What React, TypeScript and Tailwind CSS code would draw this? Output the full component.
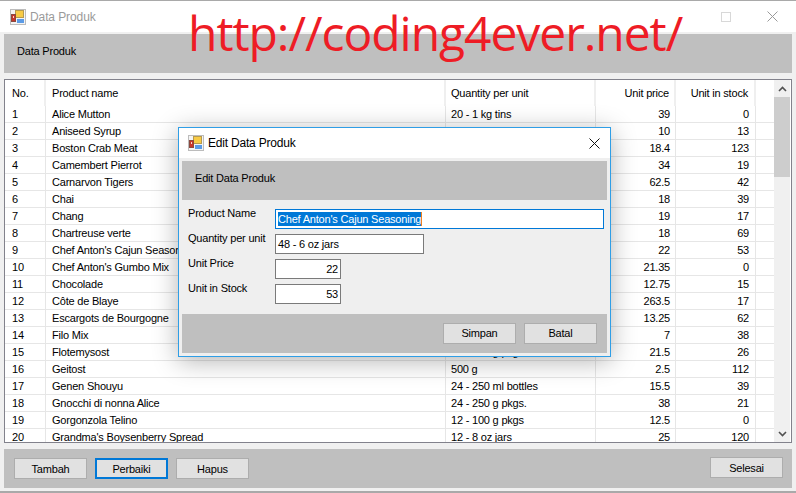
const rows: [string, string, string, string][] = [
  ["Alice Mutton", "20 - 1 kg tins", "39", "0"],
  ["Aniseed Syrup", "12 - 550 ml bottles", "10", "13"],
  ["Boston Crab Meat", "24 - 4 oz tins", "18.4", "123"],
  ["Camembert Pierrot", "15 - 300 g rounds", "34", "19"],
  ["Carnarvon Tigers", "16 kg pkg.", "62.5", "42"],
  ["Chai", "10 boxes x 20 bags", "18", "39"],
  ["Chang", "24 - 12 oz bottles", "19", "17"],
  ["Chartreuse verte", "750 cc per bottle", "18", "69"],
  ["Chef Anton's Cajun Seasoning", "48 - 6 oz jars", "22", "53"],
  ["Chef Anton's Gumbo Mix", "36 boxes", "21.35", "0"],
  ["Chocolade", "10 pkgs.", "12.75", "15"],
  ["Côte de Blaye", "12 - 75 cl bottles", "263.5", "17"],
  ["Escargots de Bourgogne", "24 pieces", "13.25", "62"],
  ["Filo Mix", "16 - 2 kg boxes", "7", "38"],
  ["Flotemysost", "10 - 500 g pkgs.", "21.5", "26"],
  ["Geitost", "500 g", "2.5", "112"],
  ["Genen Shouyu", "24 - 250 ml bottles", "15.5", "39"],
  ["Gnocchi di nonna Alice", "24 - 250 g pkgs.", "38", "21"],
  ["Gorgonzola Telino", "12 - 100 g pkgs", "12.5", "0"],
  ["Grandma's Boysenberry Spread", "12 - 8 oz jars", "25", "120"],
];

function AppIcon() {
  return (
    <svg width="16" height="16" viewBox="0 0 16 16" className="shrink-0">
      <rect x="0.5" y="0.5" width="15" height="15" fill="#f4f4f4" stroke="#bcbcbc" />
      <rect x="5.5" y="1.5" width="8" height="7" fill="#f8cb45" stroke="#b59a50" />
      <rect x="1.5" y="5.5" width="4" height="7" fill="#c9352b" stroke="#8a4a40" />
      <rect x="3" y="7" width="1" height="2" fill="#f3d9cc" />
      <rect x="7" y="10" width="7" height="4" fill="#5b9be6" />
    </svg>
  );
}

function WinButton({ label, focused }: { label: string; focused?: boolean }) {
  return (
    <div
      className={
        focused
          ? "w-[73px] h-[21px] flex items-center justify-center bg-[#e1e1e1] border-2 border-[#0078d7] text-black"
          : "w-[73px] h-[21px] flex items-center justify-center bg-[#e1e1e1] border border-[#adadad] text-black"
      }
    >
      {label}
    </div>
  );
}

function Field({ width, value, right }: { width: string; value: string; right?: boolean }) {
  return (
    <div className={`${width} h-[20px] bg-white border border-[#7a7a7a] flex items-center px-[2px] ${right ? "justify-end" : ""}`}>
      {value}
    </div>
  );
}

export default function App() {
  return (
    <div className="relative w-[796px] h-[493px] overflow-hidden bg-[#f0f0f0] text-[11px] leading-[14px] tracking-[-0.2px] text-black font-['Liberation_Sans',Arial,sans-serif] border-t border-b-2 border-[#a9a9a9]">
      {/* title bar */}
      <div className="h-[31px] bg-white flex items-center pl-[10px] pr-[18px]">
        <AppIcon />
        <span className="ml-[4px] text-[12px] tracking-[-0.1px] text-[#9a9a9a]">Data Produk</span>
        <div className="ml-auto flex items-center gap-[36px]">
          <div className="w-[10px] h-[10px] border border-[#d8d8d8]" />
          <svg width="11" height="11" viewBox="0 0 11 11" stroke="#9a9a9a" fill="none">
            <path d="M0.5 0.5 L10.5 10.5 M10.5 0.5 L0.5 10.5" />
          </svg>
        </div>
      </div>

      <div className="px-[4px] pt-[2px]">
        {/* header panel */}
        <div className="h-[39px] bg-[#bfbfbf] pl-[13px] pt-[10px]">Data Produk</div>

        {/* grid */}
        <div className="mt-[6px] h-[364px] bg-white border border-[#82828c] flex overflow-hidden">
          <div className="flex-1 min-w-0">
            <div className="h-[26px] flex items-center">
              <div className="w-[41px] h-full pl-[7px] flex items-center border-r-2 border-[#efefef]">No.</div>
              <div className="w-[400px] h-full pl-[6px] flex items-center border-r-2 border-[#efefef]">Product name</div>
              <div className="w-[150px] h-full pl-[5px] flex items-center border-r-2 border-[#efefef]">Quantity per unit</div>
              <div className="w-[80px] h-full pr-[5px] flex items-center justify-end border-r-2 border-[#efefef]">Unit price</div>
              <div className="w-[80px] h-full pr-[6px] flex items-center justify-end border-r-2 border-[#efefef]">Unit in stock</div>
            </div>
            {rows.map((r, i) => (
              <div key={r[0]} className="h-[17px] flex items-center border-b border-[#e6e6e6]">
                <div className="w-[41px] h-full pl-[7px] flex items-center border-r border-[#e6e6e6]">{i + 1}</div>
                <div className="w-[400px] h-full pl-[6px] flex items-center border-r border-[#e6e6e6]">{r[0]}</div>
                <div className="w-[150px] h-full pl-[5px] flex items-center border-r border-[#e6e6e6]">{r[1]}</div>
                <div className="w-[80px] h-full pr-[5px] flex items-center justify-end border-r border-[#e6e6e6]">{r[2]}</div>
                <div className="w-[80px] h-full pr-[6px] flex items-center justify-end border-r border-[#e6e6e6]">{r[3]}</div>
              </div>
            ))}
          </div>
          {/* scrollbar */}
          <div className="w-[16px] mr-[1px] bg-[#f0f0f0] flex flex-col">
            <div className="h-[17px] flex items-center justify-center">
              <svg width="9" height="6" viewBox="0 0 9 6" fill="none" stroke="#505050" strokeWidth="1.6">
                <path d="M1 5 L4.5 1.5 L8 5" />
              </svg>
            </div>
            <div className="h-[80px] bg-[#cdcdcd]" />
            <div className="flex-1" />
            <div className="h-[17px] flex items-center justify-center">
              <svg width="9" height="6" viewBox="0 0 9 6" fill="none" stroke="#505050" strokeWidth="1.6">
                <path d="M1 1 L4.5 4.5 L8 1" />
              </svg>
            </div>
          </div>
        </div>

        {/* bottom panel */}
        <div className="mt-[6px] h-[39px] bg-[#bfbfbf] pl-[10px] pr-[9px] flex items-center gap-[8px]">
          <WinButton label="Tambah" />
          <WinButton label="Perbaiki" focused />
          <WinButton label="Hapus" />
          <div className="ml-auto -mt-[2px]">
            <WinButton label="Selesai" />
          </div>
        </div>
      </div>

      {/* watermark */}
      <div className="absolute left-[188px] top-[4px] text-[48px] leading-[56px] tracking-[-1.05px] text-[#ee1c25] font-['Open_Sans',sans-serif] whitespace-nowrap">
        http://coding4ever.net/
      </div>

      {/* dialog */}
      <div className="absolute left-[178px] top-[126px] w-[433px] h-[230px] bg-[#efefef] border border-[#2f9ee6] shadow-[0_4px_24px_rgba(0,0,0,0.3)] flex flex-col">
        <div className="h-[30px] bg-white flex items-center pl-[9px] pr-[10px] shrink-0">
          <AppIcon />
          <span className="ml-[4px] text-[12px] tracking-[-0.2px]">Edit Data Produk</span>
          <svg className="ml-auto" width="11" height="11" viewBox="0 0 11 11" stroke="#111" fill="none">
            <path d="M0.5 0.5 L10.5 10.5 M10.5 0.5 L0.5 10.5" />
          </svg>
        </div>
        <div className="mx-[3px] mt-[3px] h-[39px] bg-[#bfbfbf] pl-[13px] pt-[10px] shrink-0">Edit Data Produk</div>
        <div className="pl-[9px] pr-[6px] pt-[9px] flex flex-col gap-[5px] flex-1">
          <div className="flex items-start h-[20px]">
            <div className="w-[87px] -mt-[3px] shrink-0">Product Name</div>
            <div className="w-[329px] h-[20px] bg-white border border-[#0078d7] flex items-center px-[2px]">
              <span className="bg-[#0078d7] text-white border-r border-[#f08020]">Chef Anton's Cajun Seasoning</span>
            </div>
          </div>
          <div className="flex items-start h-[20px]">
            <div className="w-[87px] -mt-[3px] shrink-0 whitespace-nowrap">Quantity per unit</div>
            <Field width="w-[149px]" value="48 - 6 oz jars" />
          </div>
          <div className="flex items-start h-[20px]">
            <div className="w-[87px] -mt-[3px] shrink-0">Unit Price</div>
            <Field width="w-[66px]" value="22" right />
          </div>
          <div className="flex items-start h-[20px]">
            <div className="w-[87px] -mt-[3px] shrink-0">Unit in Stock</div>
            <Field width="w-[66px]" value="53" right />
          </div>
        </div>
        <div className="mx-[3px] mb-[3px] h-[39px] bg-[#bfbfbf] pr-[10px] pb-[1px] flex items-center justify-end gap-[8px] shrink-0">
          <WinButton label="Simpan" />
          <WinButton label="Batal" />
        </div>
      </div>
    </div>
  );
}
